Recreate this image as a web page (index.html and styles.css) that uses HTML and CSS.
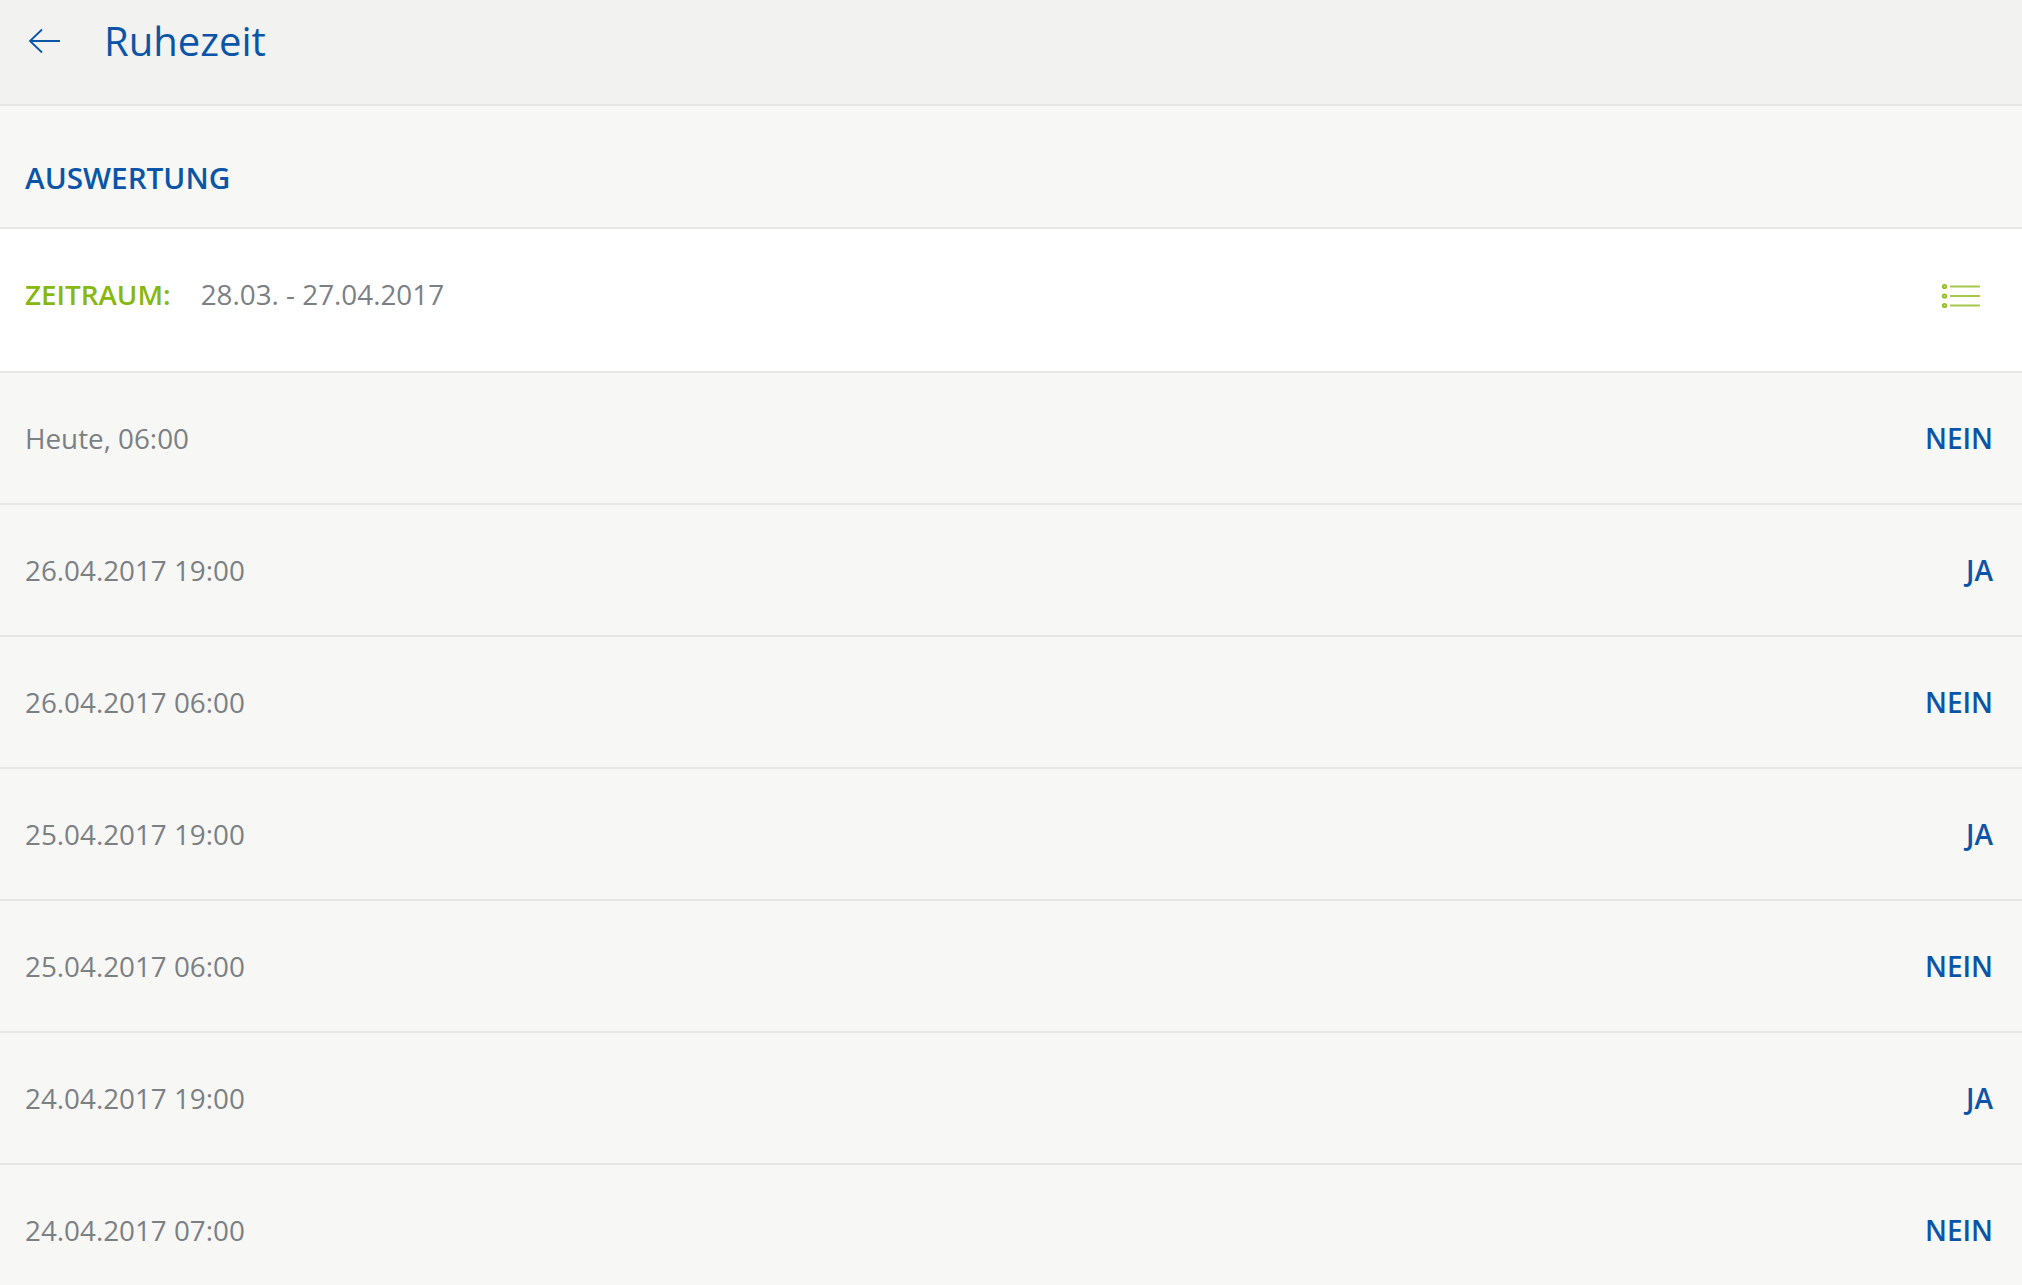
FILE: index.html
```html
<!DOCTYPE html>
<html lang="de">
<head>
<meta charset="utf-8">
<title>Ruhezeit</title>
<link rel="stylesheet" href="styles.css">
</head>
<body>
<header class="topbar">
  <svg class="back" width="36" height="28" viewBox="0 0 36 28" fill="none" stroke="#0a55a8" stroke-width="1.8"><path d="M33 14H4M15 2.500 3 14l12 11.500"/></svg>
  <h1 class="title">Ruhezeit</h1>
</header>
<section class="section-head"><h2 class="section-title">AUSWERTUNG</h2></section>
<div class="filter">
  <span class="filter-label">ZEITRAUM:</span>
  <span class="filter-value">28.03. - 27.04.2017</span>
  <svg class="filter-icon" width="38" height="26" viewBox="0 0 38 26" fill="none" stroke="#a5c94a"><g stroke-width="2"><path d="M8 3.500h30M8 13h30M8 22.500h30"/></g><g fill="#c4dd84" stroke="#8fbc1e" stroke-width="1.600"><circle cx="2.500" cy="3.500" r="1.800"/><circle cx="2.500" cy="13" r="1.800"/><circle cx="2.500" cy="22.500" r="1.800"/></g></svg>
</div>
<ul class="rows">
  <li class="row"><span class="when">Heute, 06:00</span><span class="val">NEIN</span></li>
  <li class="row"><span class="when">26.04.2017 19:00</span><span class="val">JA</span></li>
  <li class="row"><span class="when">26.04.2017 06:00</span><span class="val">NEIN</span></li>
  <li class="row"><span class="when">25.04.2017 19:00</span><span class="val">JA</span></li>
  <li class="row"><span class="when">25.04.2017 06:00</span><span class="val">NEIN</span></li>
  <li class="row"><span class="when">24.04.2017 19:00</span><span class="val">JA</span></li>
  <li class="row"><span class="when">24.04.2017 07:00</span><span class="val">NEIN</span></li>
</ul>
</body>
</html>
```
FILE: styles.css
```css
* { box-sizing: border-box; }
html, body { margin: 0; padding: 0; height: 100%; overflow: hidden; }
body { background: #f7f7f5; font-family: "Open Sans", "Noto Sans", sans-serif; color: #7b8085; }
.topbar { height: 106px; background: #f2f2f1; border-bottom: 2px solid #e6e6e4; display: flex; align-items: flex-start; padding-left: 27px; }
.back { margin-top: 27px; flex: none; }
.title { margin: 15px 0 0 41px; font-size: 40px; line-height: 52px; font-weight: 400; color: #0a55a8; }
.section-head { height: 123px; border-bottom: 2px solid #e6e6e4; padding: 22px 25px 0; display: flex; align-items: center; }
.section-title { margin: 0; font-size: 29.700px; line-height: 40px; font-weight: 600; color: #0a55a8; }
.filter { height: 144px; background: #fff; border-bottom: 2px solid #e6e6e4; display: flex; align-items: flex-start; padding: 45px 42px 0 25px; }
.filter-label { font-size: 27.800px; line-height: 40px; font-weight: 600; color: #86b80f; }
.filter-value { margin-left: 30px; font-size: 27.800px; line-height: 40px; }
.filter-icon { margin-left: auto; margin-top: 9px; }
.rows { list-style: none; margin: 0; padding: 0; }
.row { height: 132px; border-bottom: 2px solid #e6e6e4; display: flex; justify-content: space-between; align-items: center; padding: 0 29px 0 25px; font-size: 27.800px; }
.val { font-weight: 600; color: #0a55a8; font-size: 28px; }
```
